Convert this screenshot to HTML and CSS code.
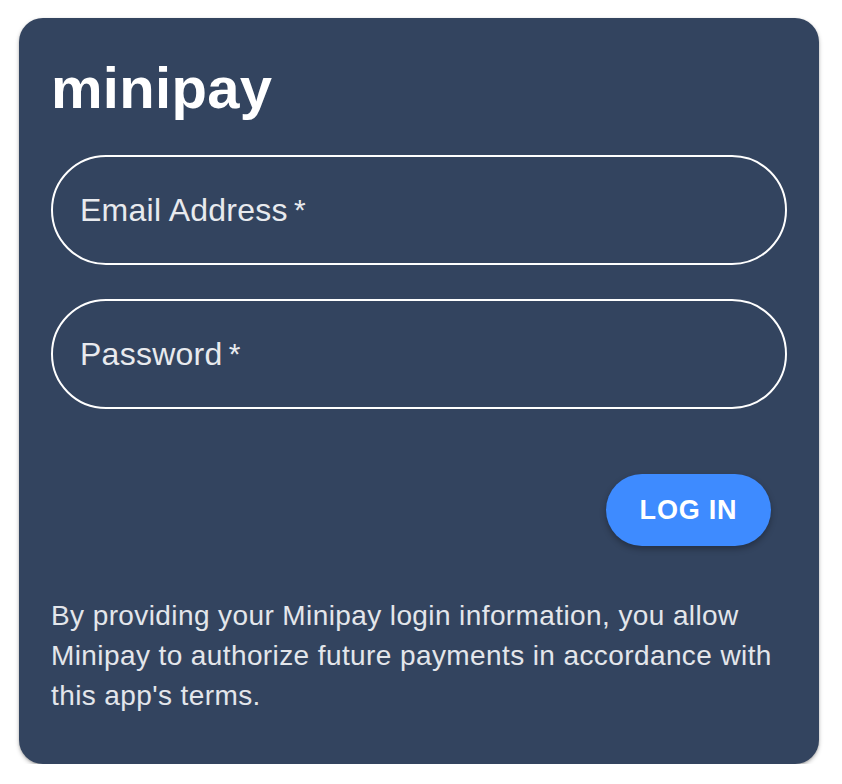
FILE: index.html
```html
<!DOCTYPE html>
<html lang="en">
<head>
<meta charset="utf-8">
<title>minipay</title>
<link rel="stylesheet" href="styles.css">
</head>
<body>
<div class="card">
  <h1 class="brand">minipay</h1>
  <form class="form">
    <div class="field"><span class="label">Email Address</span><span class="ast">&thinsp;*</span></div>
    <div class="field"><span class="label">Password</span><span class="ast">&thinsp;*</span></div>
    <div class="actions"><button type="button" class="btn">LOG IN</button></div>
  </form>
  <p class="terms">By providing your Minipay login information, you allow Minipay to authorize future payments in accordance with this app's terms.</p>
</div>
</body>
</html>
```
FILE: styles.css
```css
html, body {
  margin: 0;
  padding: 0;
  background: #ffffff;
}
body {
  font-family: "Liberation Sans", Arial, sans-serif;
  padding: 18px 0 0 19px;
}
.card {
  width: 800px;
  box-sizing: border-box;
  background: #33445f;
  border-radius: 24px;
  padding: 35px 32px 48px 32px;
  box-shadow: 0 2px 4px rgba(0,0,0,0.25), 0 1px 2px rgba(0,0,0,0.15);
  color: #ffffff;
}
.brand {
  margin: 0;
  font-size: 58px;
  line-height: 70px;
  font-weight: 700;
  letter-spacing: 0.3px;
  color: #ffffff;
}
.form {
  margin-top: 32px;
  display: flex;
  flex-direction: column;
}
.field {
  height: 110px;
  box-sizing: border-box;
  border: 2px solid #ffffff;
  border-radius: 55px;
  padding: 0 27px;
  display: flex;
  align-items: center;
  font-size: 32px;
  letter-spacing: 0.25px;
  color: #e8eaee;
}
.field + .field {
  margin-top: 34px;
}
.ast {
  font-size: 30px;
}
.actions {
  display: flex;
  justify-content: flex-end;
  padding-right: 16px;
  margin-top: 65px;
}
.btn {
  width: 165px;
  height: 72px;
  border: none;
  border-radius: 36px;
  background: #3e8bff;
  color: #ffffff;
  font-family: "Liberation Sans", Arial, sans-serif;
  font-weight: 700;
  font-size: 27px;
  letter-spacing: 0.8px;
  box-shadow: 0 3px 6px rgba(0,0,0,0.3);
  padding: 0;
}
.terms {
  margin: 50px 0 0 0;
  font-size: 28px;
  line-height: 40px;
  letter-spacing: 0.4px;
  color: #e3e6eb;
}
```
